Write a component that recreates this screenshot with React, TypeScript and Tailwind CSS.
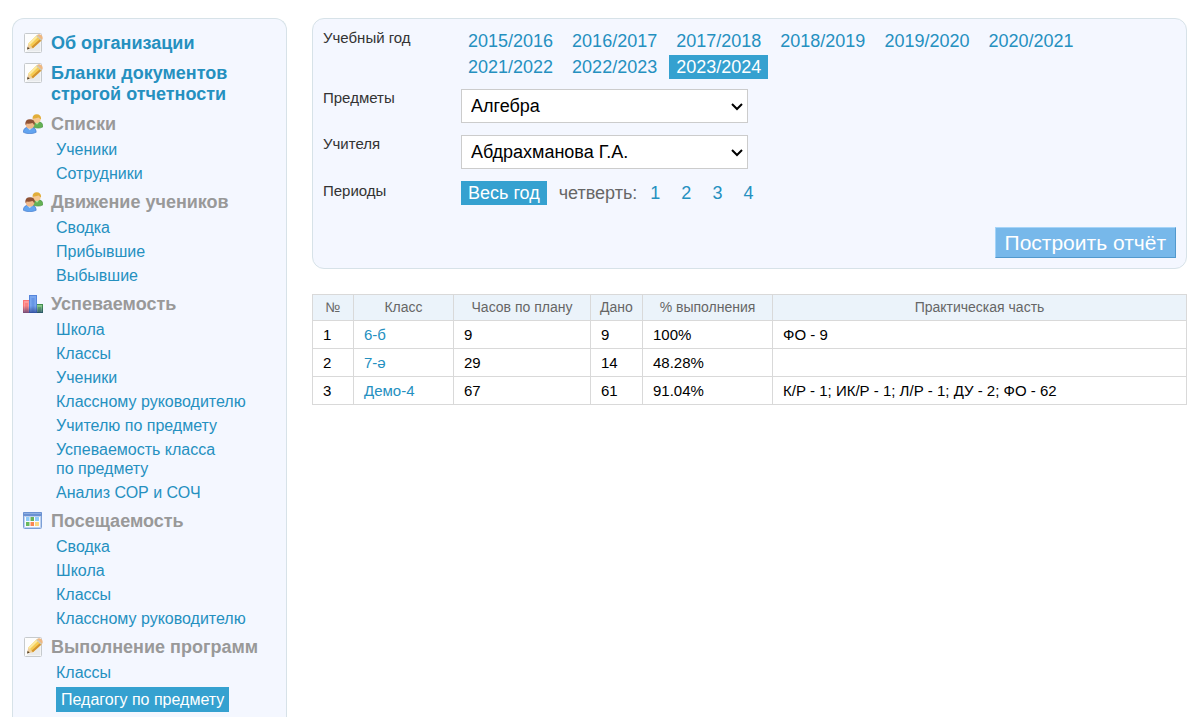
import { useState, type ReactNode } from "react";

type IconName = "edit" | "users" | "chart" | "calendar";

type MenuItem = { label: string; active?: boolean };

type MenuGroup = {
  title: string;
  icon: IconName;
  link?: boolean;
  items?: MenuItem[];
};

const menu: MenuGroup[] = [
  { title: "Об организации", icon: "edit", link: true },
  { title: "Бланки документов строгой отчетности", icon: "edit", link: true },
  {
    title: "Списки",
    icon: "users",
    items: [{ label: "Ученики" }, { label: "Сотрудники" }],
  },
  {
    title: "Движение учеников",
    icon: "users",
    items: [{ label: "Сводка" }, { label: "Прибывшие" }, { label: "Выбывшие" }],
  },
  {
    title: "Успеваемость",
    icon: "chart",
    items: [
      { label: "Школа" },
      { label: "Классы" },
      { label: "Ученики" },
      { label: "Классному руководителю" },
      { label: "Учителю по предмету" },
      { label: "Успеваемость класса по\u00a0предмету" },
      { label: "Анализ СОР и СОЧ" },
    ],
  },
  {
    title: "Посещаемость",
    icon: "calendar",
    items: [
      { label: "Сводка" },
      { label: "Школа" },
      { label: "Классы" },
      { label: "Классному руководителю" },
    ],
  },
  {
    title: "Выполнение программ",
    icon: "edit",
    items: [{ label: "Классы" }, { label: "Педагогу по предмету", active: true }],
  },
];

const years = [
  "2015/2016",
  "2016/2017",
  "2017/2018",
  "2018/2019",
  "2019/2020",
  "2020/2021",
  "2021/2022",
  "2022/2023",
  "2023/2024",
];

const rows = [
  { name: "6-б", plan: "9", given: "9", percent: "100%", practice: "ФО - 9" },
  { name: "7-ə", plan: "29", given: "14", percent: "48.28%", practice: "" },
  {
    name: "Демо-4",
    plan: "67",
    given: "61",
    percent: "91.04%",
    practice: "К/Р - 1; ИК/Р - 1; Л/Р - 1; ДУ - 2; ФО - 62",
  },
];

function EditIcon() {
  return (
    <svg viewBox="0 0 20 20" className="size-5">
      <rect x="1.5" y="0.5" width="17" height="19" rx="1" fill="#fdfdfd" stroke="#c6cacd" />
      <path d="M3 18.500h14.500V9z" fill="#e9ebed" />
      <path d="M4 16.500 5.300 10.500 9.900 15.300z" fill="#f0cf9c" />
      <path d="M4 16.500l.7-2.800 2 2.100z" fill="#54432f" />
      <path d="M5.300 10.500 13.500 2.600l5 4.800-8.600 7.900z" fill="#f5cb52" />
      <path d="M5.300 10.500 13.500 2.600l1.600 1.500-8.200 8z" fill="#fbe9a0" />
      <path d="M8.500 13.800 17.100 6l1.400 1.400-8.600 7.900z" fill="#d3932f" />
      <path d="M14.800 1.500q1.700-1 3.700.8 1.800 2 .9 4l-1.100 1.200-4.700-4.800z" fill="#efb780" />
      <path d="M13.200 3 14.300 2l4.800 4.700-1.100 1z" fill="#cfc9b2" />
    </svg>
  );
}

function UsersIcon() {
  return (
    <svg viewBox="0 0 20 20" className="size-5">
      <path d="M9.500 13.500Q9 8 14 7.600q6 0 6 5.200-2.500 1.500-5.200 1.300z" fill="#63b154" stroke="#479040" strokeWidth="0.600" />
      <path d="M12 8.600l2 2.200 2-2.200z" fill="#b5e3a5" />
      <ellipse cx="13.700" cy="5.200" rx="3.900" ry="3.700" fill="#f6c891" />
      <path d="M9.500 4.800Q9.500.2 13.700.2t4.400 4.600l-.9.400q-.4-1.400-1.600-1.800-2.600.8-6.100 1.400z" fill="#e2ae3a" />
      <path d="M.4 18.300Q.2 13 6.700 13t6.500 5.300q-2.600 1.400-6.500 1.400T.4 18.300z" fill="#62a4f0" stroke="#3570c8" strokeWidth="0.600" />
      <path d="M4.500 13.800l2.300 2.400 2.300-2.400z" fill="#c3defa" />
      <ellipse cx="7" cy="10.600" rx="4.400" ry="4" fill="#f0b98b" />
      <path d="M2.300 10.600Q2 5.300 7 5.300t4.900 5.300l-1.100.2q-.2-1.300-1.300-1.800-2.800 1-6 .6l-.3 1.200z" fill="#8f5235" />
    </svg>
  );
}

function ChartIcon() {
  return (
    <svg viewBox="0 0 20 18" className="mt-px h-[18px] w-5">
      <defs>
        <linearGradient id="barShade" x1="0" y1="0" x2="0" y2="1">
          <stop offset="0.600" stopColor="#1c2f7a" stopOpacity="0" />
          <stop offset="1" stopColor="#1c2f7a" stopOpacity="0.600" />
        </linearGradient>
      </defs>
      <path d="M0 5h6v13H0z" fill="#fb7474" />
      <path d="M1 6h5v11H1z" fill="#fd9a9a" />
      <path d="M2 8h3v9H2z" fill="#fb8080" />
      <path d="M6 0h8v18H6z" fill="#5585dc" />
      <path d="M7 1h6v16H7z" fill="#7aa6ee" />
      <path d="M8.500 3h3v14h-3z" fill="#6796e6" />
      <path d="M14 9h6v9h-6z" fill="#418e50" />
      <path d="M14 10h5v7h-5z" fill="#88c888" />
      <path d="M15 12h3v5h-3z" fill="#65ae68" />
      <path d="M0 5h6V0h8v9h6v9H0z" fill="url(#barShade)" />
    </svg>
  );
}

function CalendarIcon() {
  return (
    <svg viewBox="0 0 19 17" className="mt-px h-[17px] w-[19px]">
      <rect x="0.500" y="0.500" width="18" height="16" rx="1" fill="#fff" stroke="#7c9fd6" />
      <rect x="0" y="0" width="19" height="4" rx="1" fill="#6a91d2" />
      <path d="M1 1.500h17" stroke="#8eafe2" />
      <rect x="1.500" y="4.500" width="16" height="11" fill="#f8fbff" stroke="#bed1ee" />
      <path d="M3 5h3.500v4H3z" fill="#8ecbf8" />
      <path d="M7.500 5H11v4H7.500z" fill="#67b25a" />
      <path d="M12 5h4v4h-4z" fill="#8ecbf8" />
      <path d="M3 10h3.500v4H3z" fill="#6ab85c" />
      <path d="M7.500 10H11v4H7.500z" fill="#fb8650" />
      <path d="M12 10h4v4h-4z" fill="#fbd880" />
    </svg>
  );
}

const icons = {
  edit: EditIcon,
  users: UsersIcon,
  chart: ChartIcon,
  calendar: CalendarIcon,
};

function Group({ group }: { group: MenuGroup }) {
  const Icon = icons[group.icon];
  return (
    <li>
      <div className="flex gap-2">
        <span className="w-5 shrink-0">
          <Icon />
        </span>
        <h2 className="max-w-[210px] text-lg leading-[21px] font-bold text-[#999]">
          {group.link ? (
            <a href="#" className="text-[#2590bf]">
              {group.title}
            </a>
          ) : (
            group.title
          )}
        </h2>
      </div>
      {group.items && (
        <ul className="mt-[5px] ml-[33px] flex flex-col items-start gap-[5px] text-base leading-[19px]">
          {group.items.map((item) => (
            <li key={item.label} className="max-w-[200px]">
              {item.active ? (
                <a href="#" className="block bg-[#35a1d0] px-[5px] py-[3px] text-white">
                  {item.label}
                </a>
              ) : (
                <a href="#" className="block text-[#2590bf]">
                  {item.label}
                </a>
              )}
            </li>
          ))}
        </ul>
      )}
    </li>
  );
}

function Choice({
  label,
  active,
  onClick,
}: {
  label: string;
  active: boolean;
  onClick: () => void;
}) {
  return (
    <button
      type="button"
      onClick={onClick}
      className={
        active
          ? "bg-[#35a1d0] px-[7px] leading-6 text-white"
          : "px-[7px] leading-6 text-[#2590bf]"
      }
    >
      {label}
    </button>
  );
}

function Select({ id, children }: { id: string; children: ReactNode }) {
  return (
    <div className="relative w-[287px]">
      <select
        id={id}
        className="block h-[34px] w-full appearance-none border border-[#ccc] bg-white pr-7 pl-[9px] text-black"
      >
        {children}
      </select>
      <svg
        viewBox="0 0 12 8"
        className="pointer-events-none absolute top-[14px] right-[5px] h-2 w-3"
        fill="none"
        stroke="#000"
        strokeWidth="2"
      >
        <path d="M1 1l5 5 5-5" />
      </svg>
    </div>
  );
}

export default function App() {
  const [year, setYear] = useState("2023/2024");
  const [period, setPeriod] = useState("Весь год");

  return (
    <div className="flex min-h-screen items-stretch gap-[25px] bg-white pt-[18px] pr-[11px] pl-3 font-['Liberation_Sans',Arial,sans-serif]">
      <nav className="w-[275px] shrink-0 rounded-t-xl border border-b-0 border-[#d7e2e8] bg-[#f4f7ff] px-[10px] pt-[14px]">
        <ul className="flex flex-col gap-[9px]">
          {menu.map((group) => (
            <Group key={group.title} group={group} />
          ))}
        </ul>
      </nav>

      <main className="min-w-0 flex-1">
        <form
          onSubmit={(e) => e.preventDefault()}
          className="rounded-xl border border-[#d7e2e8] bg-[#f4f7ff] p-[10px] text-lg"
        >
          <div className="flex">
            <span className="w-[138px] shrink-0 text-[15px] leading-[18px] text-[#333]">
              Учебный год
            </span>
            <div className="flex flex-wrap gap-x-[5px] gap-y-0.5">
              {years.map((y) => (
                <Choice key={y} label={y} active={y === year} onClick={() => setYear(y)} />
              ))}
            </div>
          </div>
          <div className="mt-[10px] flex">
            <label
              htmlFor="subject"
              className="w-[138px] shrink-0 text-[15px] leading-[18px] text-[#333]"
            >
              Предметы
            </label>
            <Select id="subject">
              <option>Алгебра</option>
            </Select>
          </div>
          <div className="mt-3 flex">
            <label
              htmlFor="teacher"
              className="w-[138px] shrink-0 text-[15px] leading-[18px] text-[#333]"
            >
              Учителя
            </label>
            <Select id="teacher">
              <option>Абдрахманова Г.А.</option>
            </Select>
          </div>
          <div className="mt-3 flex">
            <span className="w-[138px] shrink-0 text-[15px] leading-5 text-[#333]">
              Периоды
            </span>
            <Choice
              label="Весь год"
              active={period === "Весь год"}
              onClick={() => setPeriod("Весь год")}
            />
            <span className="mr-1.5 ml-3 leading-6 text-[#666]">четверть:</span>
            <div className="flex gap-[7px]">
              {["1", "2", "3", "4"].map((p) => (
                <Choice key={p} label={p} active={p === period} onClick={() => setPeriod(p)} />
              ))}
            </div>
          </div>
          <div className="mt-[22px] flex justify-end">
            <button
              type="submit"
              className="border border-t-[#a5d4f8] border-r-[#5299cd] border-b-[#5299cd] border-l-[#a5d4f8] bg-[#77b8ea] px-[9px] text-[21px] leading-[29px] text-white"
            >
              Построить отчёт
            </button>
          </div>
        </form>

        <table className="mt-[25px] w-full table-fixed border-collapse text-[15px] leading-[17px] text-black [&_td]:border [&_td]:border-[#d9d9d9] [&_td]:px-[10px] [&_td]:py-[5px] [&_th]:border [&_th]:border-[#d9d9d9] [&_th]:pb-0.5">
          <thead>
            <tr className="h-[26px] bg-[#ebf3fa] text-sm text-[#666] [&>th]:font-normal">
              <th className="w-[41px]">№</th>
              <th className="w-[100px]">Класс</th>
              <th className="w-[137px]">Часов по плану</th>
              <th className="w-[52px]">Дано</th>
              <th className="w-[130px]">% выполнения</th>
              <th>Практическая часть</th>
            </tr>
          </thead>
          <tbody>
            {rows.map((row, i) => (
              <tr key={row.name} className="h-7">
                <td>{i + 1}</td>
                <td>
                  <a href="#" className="text-[#2590bf]">
                    {row.name}
                  </a>
                </td>
                <td>{row.plan}</td>
                <td>{row.given}</td>
                <td>{row.percent}</td>
                <td>{row.practice}</td>
              </tr>
            ))}
          </tbody>
        </table>
      </main>
    </div>
  );
}
